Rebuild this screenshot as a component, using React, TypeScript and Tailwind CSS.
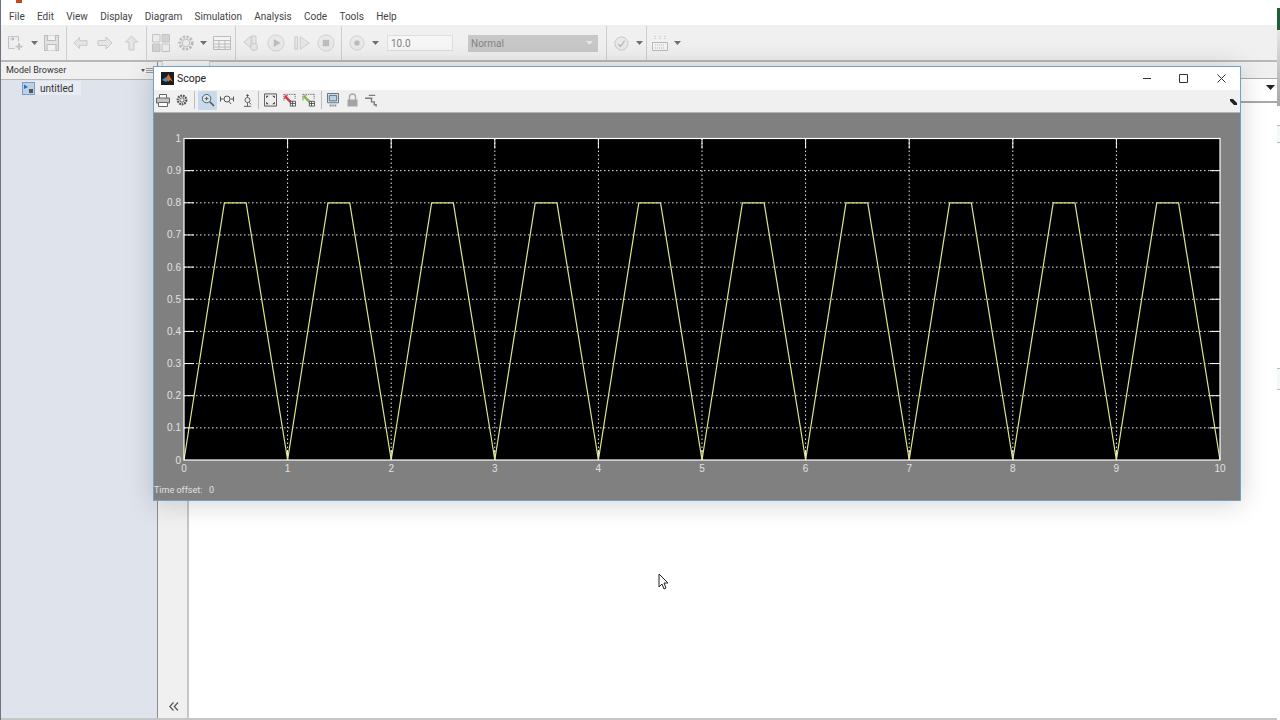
import React from "react";

const menus = ["File", "Edit", "View", "Display", "Diagram", "Simulation", "Analysis", "Code", "Tools", "Help"];

const X0 = 184;
const X1 = 1220;
const Y0 = 138.5;
const Y1 = 460;
const xAt = (v: number) => X0 + ((X1 - X0) * v) / 10;
const yAt = (v: number) => Y1 - (Y1 - Y0) * v;

function signalPoints() {
  const pts: string[] = [];
  for (let k = 0; k < 10; k++) {
    pts.push(`${xAt(k)},${yAt(0)}`, `${xAt(k + 0.39)},${yAt(0.8)}`, `${xAt(k + 0.6)},${yAt(0.8)}`);
  }
  pts.push(`${xAt(10)},${yAt(0)}`);
  return pts.join(" ");
}

function Arrow({ className = "" }: { className?: string }) {
  return (
    <svg width="7" height="4" viewBox="0 0 7 4" className={`shrink-0 ${className}`}>
      <path d="M0 0h7L3.5 4z" fill="#707070" />
    </svg>
  );
}

function Sep({ className = "" }: { className?: string }) {
  return <div className={`w-px h-[34px] bg-[#cdcdcd] shrink-0 ${className}`} />;
}

function ScopeSep({ className = "" }: { className?: string }) {
  return <div className={`w-px h-[18px] bg-[#bdbdbd] shrink-0 ${className}`} />;
}

function MainToolbar() {
  return (
    <div className="h-[35px] bg-[#f0f0f0] flex items-center shrink-0 pl-[7px] pt-px">
      <svg width="16" height="16" viewBox="0 0 16 16" fill="none" className="shrink-0">
        <path d="M.5 1.500h10v5M.5 1.500v12h6" fill="#ebebeb" stroke="#c2c2c2" />
        <path d="M11 8v7M7.500 11.500h7" stroke="#c4c4c4" strokeWidth="2" />
        <path d="M2.500 4h3M4 2.500 6 4 4 5.500" stroke="#a8b0b8" />
      </svg>
      <Arrow className="ml-[7px]" />
      <svg width="15" height="16" viewBox="0 0 15 16" fill="none" stroke="#bdbdbd" strokeWidth="1.200" className="shrink-0 ml-[6px]">
        <path d="M.5.500h14v15H.5z" fill="#e4e4e4" />
        <path d="M3.500.500v5h8v-5M3 15.500v-6h9v6" fill="#f2f2f2" />
      </svg>
      <Sep className="ml-[7px]" />
      <svg width="15" height="14" viewBox="0 0 16 14" fill="#e4e4e4" stroke="#c8c8c8" className="shrink-0 ml-[6px]"><path d="M7 1 1 7l6 6V9.500h8v-5H7z" /></svg>
      <svg width="16" height="14" viewBox="0 0 16 14" fill="#e4e4e4" stroke="#c8c8c8" className="shrink-0 ml-[9px]"><path d="m9 1 6 6-6 6V9.500H1v-5h8z" /></svg>
      <svg width="15" height="16" viewBox="0 0 14 16" fill="#e4e4e4" stroke="#c8c8c8" className="shrink-0 ml-[11px]"><path d="M7 1 1 7h3.500v8h5V7H13z" /></svg>
      <Sep className="ml-[7px]" />
      <svg width="18" height="18" viewBox="0 0 18 18" stroke="#c4c4c4" className="shrink-0 ml-[5px]">
        <path d="M.5.500h7.500V8H.5z" fill="#ececec" />
        <path d="M10 .500h7.500V8H10z" fill="#d2d2d2" />
        <path d="M.5 10h7.500v7.500H.5z" fill="#d2d2d2" />
        <path d="M10 10h7.500v7.500H10z" fill="#ececec" />
      </svg>
      <svg width="18" height="18" viewBox="0 0 19 19" fill="none" stroke="#bcbcbc" className="shrink-0 ml-[7px]">
        <circle cx="9.500" cy="9.500" r="6.500" strokeWidth="3" strokeDasharray="2.400 1.400" />
        <circle cx="9.500" cy="9.500" r="4" fill="#ececec" />
      </svg>
      <Arrow className="ml-[5px]" />
      <svg width="18" height="14" viewBox="0 0 18 14" fill="#f4f4f4" stroke="#bcbcbc" className="shrink-0 ml-[6px]">
        <path d="M.5.500h17v13H.5zM.5 4.500h17M.5 8h17M.5 11h17M6 4.500v9M12 4.500v9" />
      </svg>
      <Sep className="ml-[4px]" />
      <svg width="17" height="18" viewBox="0 0 17 18" fill="#e6e6e6" stroke="#cacaca" className="shrink-0 ml-[7px]">
        <path d="M8 2 1 8l7 6zM9 2h4v8H9z" />
        <circle cx="11" cy="13" r="3.500" />
      </svg>
      <svg width="18" height="18" viewBox="0 0 20 20" className="shrink-0 ml-[7px]"><circle cx="10" cy="10" r="9" fill="#e9e9e9" stroke="#cfcfcf" /><path d="M7.500 5.500v9L15 10z" fill="#bcbcbc" /></svg>
      <svg width="16" height="16" viewBox="0 0 18 16" fill="#e6e6e6" stroke="#cacaca" className="shrink-0 ml-[9px]"><path d="M1 1h3v14H1zM7 1l10 7-10 7z" /></svg>
      <svg width="18" height="18" viewBox="0 0 20 20" className="shrink-0 ml-[7px]"><circle cx="10" cy="10" r="9" fill="#e9e9e9" stroke="#cfcfcf" /><rect x="6.500" y="6.500" width="7" height="7" fill="#bcbcbc" /></svg>
      <Sep className="ml-[6px]" />
      <svg width="16" height="16" viewBox="0 0 18 18" className="shrink-0 ml-[7px]"><circle cx="9" cy="9" r="8" fill="#e9e9e9" stroke="#cfcfcf" /><circle cx="9" cy="9" r="3" fill="#bcbcbc" /></svg>
      <Arrow className="ml-[7px]" />
      <div className="w-[66px] h-[16px] ml-[8px] bg-[#f6f6f6] border border-[#dedede] text-[10px] text-[#808080] pl-[3px] leading-[15px] shrink-0">10.0</div>
      <div className="w-[130px] h-[17px] ml-[15px] bg-[#c8c8c8] text-[10px] text-[#858585] pl-[3px] flex items-center justify-between pr-[5px] shrink-0">
        Normal
        <svg width="7" height="4" viewBox="0 0 7 4" className="shrink-0"><path d="M0 0h7L3.500 4z" fill="#e6e6e6" /></svg>
      </div>
      <Sep className="ml-[8px]" />
      <svg width="15" height="15" viewBox="0 0 16 16" fill="none" className="shrink-0 ml-[7px]"><circle cx="8" cy="8" r="7" fill="#e9e9e9" stroke="#c8c8c8" /><path d="M4.500 8.500 7 11l4.500-6" stroke="#bdbdbd" strokeWidth="1.500" /></svg>
      <Arrow className="ml-[7px]" />
      <Sep className="ml-[3px]" />
      <svg width="16" height="16" viewBox="0 0 16 16" fill="none" stroke="#b8b8b8" className="shrink-0 ml-[5px]">
        <path d="M.5 7.500h15v8H.5z" fill="#f4f4f4" />
        <path d="M3 1v4M8 1v4M13 1v4M3 10h10M3 13h10" strokeDasharray="1 1" />
      </svg>
      <Arrow className="ml-[6px]" />
    </div>
  );
}

function ScopeToolbar() {
  return (
    <div className="h-[23px] bg-[#f0f0f0] border-b border-[#b4b4b4] flex items-center pl-[2px] pb-[2px] relative shrink-0">
      <svg width="14" height="13" viewBox="0 0 14 13" fill="none" stroke="#666" className="shrink-0">
        <path d="M3.500 4V.5h7V4" fill="#fff" />
        <path d="M.5 4h13v5H.5z" fill="#c4c4c4" />
        <path d="M2.500 8.500h9v4h-9z" fill="#fff" />
      </svg>
      <svg width="12" height="12" viewBox="0 0 14 14" fill="none" stroke="#555" className="shrink-0 ml-[6px]">
        <circle cx="7" cy="7" r="5" strokeWidth="2.600" strokeDasharray="2 1" />
        <circle cx="7" cy="7" r="2.500" fill="#eee" />
      </svg>
      <ScopeSep className="ml-[6px]" />
      <div className="w-[19px] h-[19px] bg-[#c8daed] ml-[3px] flex items-center justify-center shrink-0">
        <svg width="14" height="14" viewBox="0 0 15 15" fill="none" stroke="#555">
          <circle cx="6" cy="6" r="4.500" fill="#dce8f2" />
          <path d="M9.500 9.500 14 14" strokeWidth="1.600" />
          <path d="M4 6h4M6 4v4" />
        </svg>
      </div>
      <svg width="14" height="10" viewBox="0 0 14 10" fill="none" stroke="#555" className="shrink-0 ml-[3px]">
        <circle cx="7" cy="4" r="3" />
        <path d="M.5 1.500v5M13.500 1.500v5M1 4h2.500M13 4h-2.500M9 6.500l2 2.500" />
      </svg>
      <svg width="9" height="15" viewBox="0 0 10 15" fill="none" stroke="#555" className="shrink-0 ml-[9px]">
        <circle cx="5" cy="7" r="2.800" />
        <path d="M5 1v3M3.500 2.500 5 .8l1.500 1.700M1 14h8M5 10v4M7 9.500l2 2.500" />
      </svg>
      <ScopeSep className="ml-[6px]" />
      <svg width="13" height="14" viewBox="0 0 15 15" fill="#eee" stroke="#444" className="shrink-0 ml-[5px]">
        <path d="M.5.500h14v14H.5z" />
        <path d="M2.500 2.500h3l-3 3zM12.500 2.500h-3l3 3zM2.500 12.500h3l-3-3zM12.500 12.500h-3l3-3z" fill="#444" stroke="none" />
      </svg>
      <svg width="13" height="14" viewBox="0 0 15 15" className="shrink-0 ml-[6px]">
        <path d="M1 1h13M1 1v8M14 1v6" stroke="#444" strokeDasharray="1 1" />
        <path d="M2 2h4L4.500 3.500 10 9l-2 2-5.500-5.500L1 7z" fill="#d9344a" />
        <path d="M8.500 9h6v5.500h-6z" fill="#fff" stroke="#444" />
        <path d="M11 9v5.500M8.500 11.500h6" stroke="#444" />
      </svg>
      <svg width="13" height="14" viewBox="0 0 15 15" className="shrink-0 ml-[6px]">
        <path d="M1 1h13M1 1v8M14 1v6" stroke="#444" strokeDasharray="1 1" />
        <path d="M2 2h4L4.500 3.500 10 9l-2 2-5.500-5.500L1 7z" fill="#86b651" />
        <path d="M8.500 9h6v5.500h-6z" fill="#fff" stroke="#444" />
        <path d="M11 9v5.500M8.500 11.500h6" stroke="#444" />
      </svg>
      <ScopeSep className="ml-[6px]" />
      <svg width="12" height="14" viewBox="0 0 13 15" fill="none" stroke="#5a6a78" className="shrink-0 ml-[5px]">
        <path d="M.5.500h12v10H.5z" fill="#e0e8ef" />
        <path d="M2.500 2.500h8v6h-8z" fill="#b6d2e6" />
        <path d="M3 13.500h7" strokeWidth="2" strokeDasharray="1 1" />
      </svg>
      <svg width="11" height="14" viewBox="0 0 11 14" className="shrink-0 ml-[8px]">
        <path d="M2.500 7V4a3 3 0 0 1 6 0v3" fill="none" stroke="#aaa" strokeWidth="1.500" />
        <path d="M.5 6.500h10v7H.5z" fill="#a4a4a4" />
      </svg>
      <svg width="13" height="15" viewBox="0 0 14 15" fill="none" stroke="#7c7c7c" className="shrink-0 ml-[7px]">
        <path d="M0 5h8M4 2h7M7 5v4h3v3h2v2" strokeWidth="1.500" />
      </svg>
      <svg width="7" height="6" viewBox="0 0 7 6" className="absolute right-[3px] top-[9px]">
        <path d="M0 0h3l4 4v2H4L0 2z" fill="#222" />
      </svg>
    </div>
  );
}

function Plot() {
  const xt = [0, 1, 2, 3, 4, 5, 6, 7, 8, 9, 10];
  const yt = [0, 0.1, 0.2, 0.3, 0.4, 0.5, 0.6, 0.7, 0.8, 0.9, 1];
  return (
    <svg
      width="1086"
      height="387"
      viewBox="154 113 1086 387"
      className="block"
      style={{ fontFamily: '"Liberation Sans", Arial, sans-serif' }}
    >
      <rect x={X0} y={Y0} width={X1 - X0} height={Y1 - Y0} fill="#000" />
      {xt.slice(1, 10).map((t) => (
        <g key={t}>
          <line x1={xAt(t)} x2={xAt(t)} y1={Y0} y2={Y1} stroke="#e8e8e8" strokeDasharray="1.500 2.500" />
          <line x1={xAt(t)} x2={xAt(t)} y1={Y0} y2={Y0 + 10} stroke="#fff" />
          <line x1={xAt(t)} x2={xAt(t)} y1={Y1 - 10} y2={Y1} stroke="#fff" />
        </g>
      ))}
      {yt.slice(1, 10).map((t) => (
        <g key={t}>
          <line x1={X0} x2={X1} y1={yAt(t)} y2={yAt(t)} stroke="#e8e8e8" strokeDasharray="1.500 2.500" />
          <line x1={X0} x2={X0 + 10} y1={yAt(t)} y2={yAt(t)} stroke="#fff" />
          <line x1={X1 - 10} x2={X1} y1={yAt(t)} y2={yAt(t)} stroke="#fff" />
        </g>
      ))}
      <polyline points={signalPoints()} fill="none" stroke="#e0e58a" strokeWidth="1.200" />
      <rect x={X0} y={Y0} width={X1 - X0} height={Y1 - Y0} fill="none" stroke="#fff" strokeWidth="1.200" />
      {xt.map((t) => (
        <text key={t} x={xAt(t)} y="471.500" textAnchor="middle" fontSize="10" fill="#e0e0e0">
          {t}
        </text>
      ))}
      {yt.map((t) => (
        <text key={t} x="181" y={yAt(t) + 3.500} textAnchor="end" fontSize="10" fill="#e0e0e0">
          {t}
        </text>
      ))}
    </svg>
  );
}

function ScopeWindow() {
  return (
    <div className="absolute left-[153px] top-[66px] w-[1088px] h-[435px] border border-[#6fa3cc] flex flex-col shadow-[0_2px_26px_rgba(0,0,0,0.18)] bg-[#808080]">
      <div className="h-[23px] bg-white flex items-center shrink-0 relative text-[10.500px] text-[#222]">
        <svg width="13" height="13" viewBox="0 0 13 13" className="ml-[7px] shrink-0">
          <rect width="13" height="13" fill="#1c1c1c" />
          <path d="M5 6 7.500 2 9 5l3 5-3-2-2 2-1-2z" fill="#dd6a22" />
          <path d="M1 8 5 5l2 3-2 2z" fill="#3d8fc4" />
        </svg>
        <span className="ml-[3px]">Scope</span>
        <svg width="8" height="1" viewBox="0 0 8 1" className="absolute left-[989px] top-[11px]"><path d="M0 .5h8" stroke="#333" /></svg>
        <svg width="9" height="9" viewBox="0 0 9 9" className="absolute left-[1025px] top-[7px]"><path d="M.5.500h8v8h-8z" fill="none" stroke="#333" /></svg>
        <svg width="9" height="9" viewBox="0 0 9 9" className="absolute left-[1063px] top-[7px]"><path d="m.5.500 8 8M8.500.500l-8 8" stroke="#333" /></svg>
      </div>
      <ScopeToolbar />
      <div className="flex-1 relative min-h-0">
        <Plot />
        <div className="absolute left-0 top-[370px] text-[9px] leading-[14px] text-[#e0e0e0] whitespace-pre">Time offset:   0</div>
      </div>
    </div>
  );
}

export default function App() {
  return (
    <div
      className="w-[1280px] h-[720px] relative overflow-hidden bg-white flex text-[#333]"
      style={{ fontFamily: 'Roboto, "Open Sans", sans-serif' }}
    >
      <div className="w-[1277px] shrink-0 flex flex-col border-l border-[#6b7480]">
        <div className="h-[25px] bg-white shrink-0 relative flex items-end pl-[8px] gap-[12.300px] text-[10px] leading-[16px] text-[#444]">
          <div className="absolute left-[15px] top-0 w-[6px] h-[3px] bg-[#c8461e]" />
          {menus.map((m) => (
            <span key={m}>{m}</span>
          ))}
        </div>
        <MainToolbar />
        <div className="h-[2px] bg-[#b8b8b8] shrink-0" />
        <div className="flex-1 flex min-h-0">
          <div className="w-[157px] shrink-0 flex flex-col border-r border-[#8c8c8c]">
            <div className="h-[18px] bg-[#f0f0f0] border-b border-[#b8b8b8] flex items-center pl-[5px] pt-px text-[9px] text-[#333] shrink-0 relative">
              Model Browser
              <svg width="12" height="6" viewBox="0 0 12 6" className="absolute right-[4px] top-[6px]">
                <path d="M0 1h4L2 4z" fill="#555" />
                <path d="M5 .5h7M5 2.500h7M5 4.500h7" stroke="#999" />
              </svg>
            </div>
            <div className="flex-1 bg-[#dfe3ec] pt-[1px]">
              <div className="ml-[21px] w-[59px] h-[14px] bg-[#e8ebf2] flex items-center text-[10px] text-[#333]">
                <svg width="13" height="13" viewBox="0 0 13 13" className="shrink-0">
                  <rect x=".5" y=".5" width="12" height="12" fill="#b9d2ea" stroke="#7a9cc0" />
                  <path d="M2 2.500 6 5 2 7z" fill="#2f6fb0" />
                  <rect x="7" y="7" width="4" height="4" fill="#555" />
                </svg>
                <span className="ml-[5px]">untitled</span>
              </div>
            </div>
          </div>
          <div className="w-[31px] shrink-0 bg-[#f0f0f0] border-r-2 border-[#c6c6c6] flex items-end justify-center pb-[7px]">
            <svg width="10" height="9" viewBox="0 0 10 9" fill="none" stroke="#555" strokeWidth="1.200" className="ml-[3px]">
              <path d="M4.500.500.800 4.500l3.700 4M9 .500 5.300 4.500l3.700 4" />
            </svg>
          </div>
          <div className="flex-1 min-w-0">
            <div className="h-[17px] bg-[#f0f0f0] border-b border-[#aaa]" />
            <div className="h-[24px] border-b-2 border-[#a8a8a8] flex justify-end pr-[2px] pt-[6px]">
              <svg width="9" height="5" viewBox="0 0 9 5" className="shrink-0"><path d="M0 0h9L4.500 5z" fill="#222" /></svg>
            </div>
          </div>
        </div>
        <div className="h-[2px] bg-[#c6c6c6] shrink-0" />
      </div>
      <div className="w-[3px] shrink-0 flex flex-col">
        <div className="h-[8px]" />
        <div className="h-[22px] bg-[#1f5c38]" />
        <div className="h-[76px] bg-gradient-to-b from-[#e6e6e6] to-[#a6a6a6]" />
        <div className="h-[19px]" />
        <div className="h-[18px] border-y border-[#b8b8b8] bg-[#f2fbfa]" />
        <div className="h-[225px]" />
        <div className="h-[22px] border-y border-[#b8b8b8] bg-[#f2fbfa]" />
      </div>
      <div className="absolute left-[162px] top-[61px] w-[48px] h-[5px] bg-[#f6f6f6] border-x border-[#d0d0d0]" />
      <ScopeWindow />
      <svg width="11" height="18" viewBox="0 0 11 18" className="absolute left-[658px] top-[573px]">
        <path d="M1 1v13l3-3 2 5 2-1-2-5h4z" fill="#fff" stroke="#222" />
      </svg>
    </div>
  );
}
